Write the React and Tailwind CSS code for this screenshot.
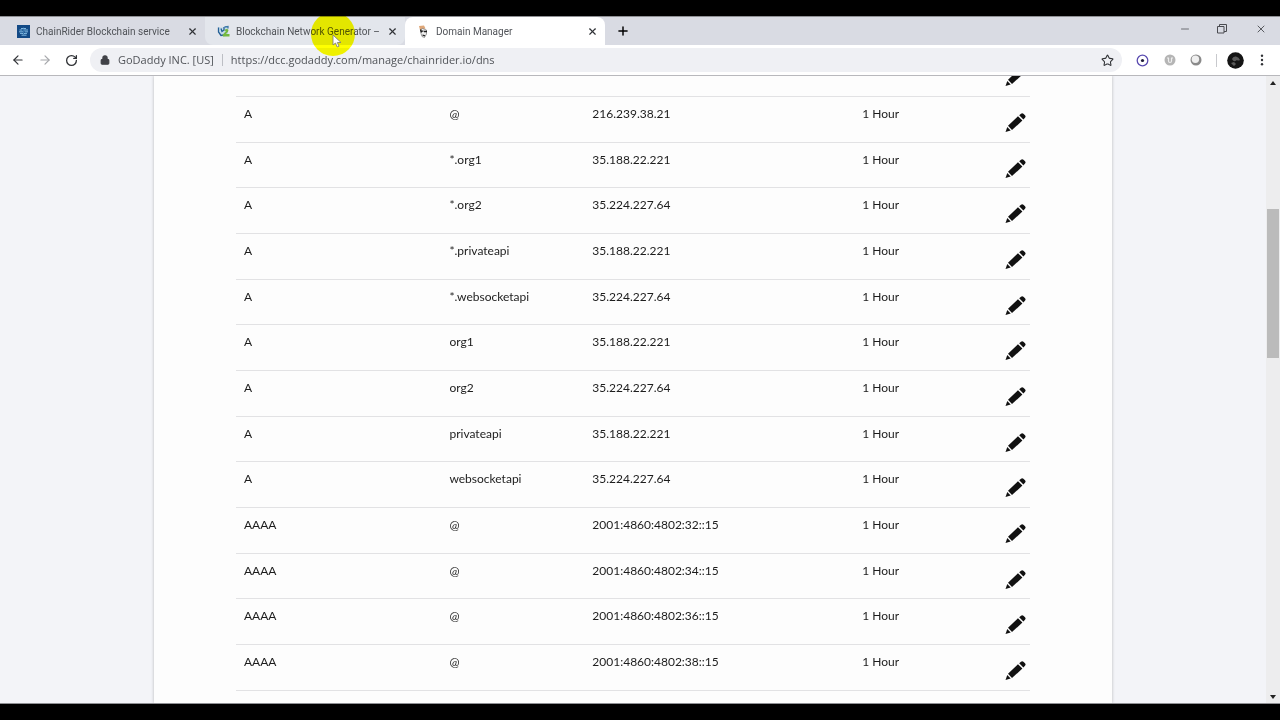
import { ArrowLeft, ArrowRight, Lock, Minus, Plus, RotateCw, Star, X } from 'lucide-react';

const tabs = [
  { title: 'ChainRider Blockchain service', icon: <ChainIcon />, shape: 'rounded-br-lg bg-[#d9dbe3]' },
  { title: 'Blockchain Network Generator –', icon: <GeneratorIcon />, shape: 'rounded-b-lg bg-[#e3e6ec]' },
  { title: 'Domain Manager', icon: <DaddyIcon />, shape: 'rounded-t-lg bg-white' },
];

const records = [
  { type: 'A', name: '@', value: '216.239.38.21' },
  { type: 'A', name: '*.org1', value: '35.188.22.221' },
  { type: 'A', name: '*.org2', value: '35.224.227.64' },
  { type: 'A', name: '*.privateapi', value: '35.188.22.221' },
  { type: 'A', name: '*.websocketapi', value: '35.224.227.64' },
  { type: 'A', name: 'org1', value: '35.188.22.221' },
  { type: 'A', name: 'org2', value: '35.224.227.64' },
  { type: 'A', name: 'privateapi', value: '35.188.22.221' },
  { type: 'A', name: 'websocketapi', value: '35.224.227.64' },
  { type: 'AAAA', name: '@', value: '2001:4860:4802:32::15' },
  { type: 'AAAA', name: '@', value: '2001:4860:4802:34::15' },
  { type: 'AAAA', name: '@', value: '2001:4860:4802:36::15' },
  { type: 'AAAA', name: '@', value: '2001:4860:4802:38::15' },
];

function ChainIcon() {
  return (
    <svg className="size-[13px] shrink-0" viewBox="0 0 13 13">
      <rect width="13" height="13" fill="#134a86" />
      <path d="M4 3.5h5M2.5 5h3M7 5h4M2 6.8h4M7.5 6.8h3.5M3 8.5h3M7 8.5h3M4.5 10.2h5" stroke="#8fc4e8" strokeWidth="0.9" />
      <path d="M6.5 2.5v8M4 4.5v4.5M9 4.5v4.5" stroke="#4f93c9" strokeWidth="0.6" />
    </svg>
  );
}

function GeneratorIcon() {
  return (
    <svg className="size-[13px] shrink-0" viewBox="0 0 13 13">
      <path d="M1 2l4 .5 5-1 1 2v6l-4 2.500-4-1.500z" fill="#c5dbe8" />
      <path d="M1.500 2.500v4.500l2.500 3.500 2.500-.5M4 3.500l1 3 2-1.500V2" fill="none" stroke="#235f96" strokeWidth="1.300" />
      <path d="M7.500 2l3.500-.5v2" fill="none" stroke="#3a78a8" strokeWidth="1.300" />
      <path d="M7 5.500q3-2.500 4.500-.5 0 2-2.500 4h3.500v2.500H6l-.5-1.500 3.500-4z" fill="#74b83f" />
    </svg>
  );
}

function DaddyIcon() {
  return (
    <svg className="size-[13px] shrink-0" viewBox="0 0 13 13">
      <path d="M2 1l5-.5 1.5 3L3 5z" fill="#dfa778" />
      <path d="M3.5 5l2-1.5 4 1.5v4l-2 3.5-2.5-1-1-3z" fill="#eee" stroke="#777" strokeWidth="0.7" />
      <path d="M4 6.2h2.5M7 6.5h3M5.5 10l2.5.8M3.5 4.5l1 3" stroke="#1c1c1c" strokeWidth="1.3" />
    </svg>
  );
}

function PencilIcon() {
  return (
    <svg className="h-5 w-[21px]" viewBox="0 0 21 20" fill="#111">
      <path d="M0.5 19l1.8-5 3.4 3.4z" />
      <path d="M3 12.8L13 3.2l4.400 4.400L7 17z" />
      <path d="M14.2 2.300l1.800-1.600q1.200-1 2.400 0l1.600 1.600q1.200 1.300 0 2.500L18.400 6.500z" />
    </svg>
  );
}

function Tab({ tab }) {
  return (
    <div className={`flex w-[200px] items-center pr-[7px] pl-3 ${tab.shape}`}>
      {tab.icon}
      <button className="ml-[6px] flex-1 text-left font-[Roboto,sans-serif] text-[10px] whitespace-nowrap text-[#505358]">
        {tab.title}
      </button>
      <button aria-label={`Close ${tab.title}`} className="flex size-3 items-center justify-center text-[#303236]">
        <X className="size-[11px]" strokeWidth={2.5} />
      </button>
    </div>
  );
}

function TabStrip() {
  return (
    <div className="flex h-7 bg-[#d9dbe3]">
      <div className="flex pl-[5px]">
        {tabs.map((tab) => (
          <Tab key={tab.title} tab={tab} />
        ))}
      </div>
      <button aria-label="New tab" className="ml-[11px] flex items-center text-black">
        <Plus className="size-[14px]" strokeWidth={2.5} />
      </button>
      <div className="ml-auto flex items-start gap-[26px] pt-[6px] pr-[13px] text-[#4a4b50]">
        <button aria-label="Minimize" className="flex size-3 items-center"><Minus className="size-3" strokeWidth={1.5} /></button>
        <button aria-label="Restore" className="flex size-3 items-center">
          <svg className="size-[10px]" viewBox="0 0 10 10" fill="none" stroke="currentColor">
            <path d="M0.5 2.5h6.5v6.5H0.5zM2.5 2.5v-2h7v7H7" />
          </svg>
        </button>
        <button aria-label="Close" className="flex size-3 items-center"><X className="size-3" strokeWidth={1.8} /></button>
      </div>
    </div>
  );
}

function Toolbar() {
  return (
    <div className="flex h-[31px] items-center border-b border-[#b8b8bc] bg-white">
      <div className="flex items-center gap-[13px] pl-[11px] text-[#303236]">
        <button aria-label="Back"><ArrowLeft className="size-[14px]" /></button>
        <button aria-label="Forward" className="text-[#a6a7ab]"><ArrowRight className="size-[14px]" /></button>
        <button aria-label="Reload"><RotateCw className="size-[13px]" strokeWidth={2.4} /></button>
      </div>
      <div className="ml-3 flex h-6 flex-1 items-center rounded-full bg-[#eff0f4] pr-2 pl-[10px] text-[11px] text-[#505358]">
        <Lock className="size-[10px] text-[#404247]" strokeWidth={3} fill="currentColor" />
        <span className="ml-2">GoDaddy INC. [US]</span>
        <span className="ml-2 h-3 w-px bg-[#bcbec4]" />
        <input
          aria-label="Address"
          className="ml-2 flex-1 bg-transparent outline-none"
          defaultValue="https://dcc.godaddy.com/manage/chainrider.io/dns"
        />
        <button aria-label="Bookmark this page" className="text-[#303236]"><Star className="size-[13px]" /></button>
      </div>
      <div className="flex items-center pr-4 pl-[14px]">
        <button aria-label="Circle extension">
          <svg className="size-[13px]" viewBox="0 0 13 13">
            <circle cx="6.5" cy="6.5" r="5.3" fill="#fff" stroke="#5a4bb0" strokeWidth="1.3" />
            <circle cx="6.5" cy="6.5" r="1.6" fill="#1d1b3a" />
          </svg>
        </button>
        <button aria-label="Shield extension" className="ml-[15px]">
          <svg className="size-3" viewBox="0 0 12 12">
            <circle cx="6" cy="6" r="5.5" fill="#b5b5b5" />
            <path d="M3 4h2M7 4h2M4.5 4v3q0 1.5 1.5 1.5T7.5 7V4" fill="none" stroke="#eee" strokeWidth="1.2" />
          </svg>
        </button>
        <button aria-label="Sphere extension" className="ml-[14px]">
          <svg className="size-3" viewBox="0 0 12 12">
            <circle cx="6" cy="6" r="5.5" fill="#8a8a8a" />
            <circle cx="5.4" cy="5.2" r="3.7" fill="#efefef" />
          </svg>
        </button>
        <span className="ml-[14px] h-[13px] w-px bg-[#c8c9cd]" />
        <button aria-label="Profile" className="ml-[10px]">
          <svg className="size-[17px]" viewBox="0 0 17 17">
            <circle cx="8.5" cy="8.5" r="8.3" fill="#141414" />
            <path d="M5 7q1-3 4-2.5T13 8q-2 1-3 0-2 2-4 .5zM4 11l3-1 2 2-2 2z" fill="#5a5a5a" />
          </svg>
        </button>
        <button aria-label="Menu" className="ml-4">
          <svg className="h-3 w-1" viewBox="0 0 4 12" fill="#303236">
            <circle cx="2" cy="1.8" r="1.2" />
            <circle cx="2" cy="6" r="1.2" />
            <circle cx="2" cy="10.2" r="1.2" />
          </svg>
        </button>
      </div>
    </div>
  );
}

function EditCell() {
  return (
    <td className="pt-4 pr-1 text-right align-top">
      <button aria-label="Edit record" className="inline-block align-top"><PencilIcon /></button>
    </td>
  );
}

function RecordsTable() {
  return (
    <table className="-mt-[25px] w-full table-fixed border-separate border-spacing-0 font-[Lato,sans-serif] text-xs text-[#1c1c1c] [&_td]:border-b [&_td]:border-[#e2e2e4]">
      <colgroup>
        <col className="w-[26%]" />
        <col className="w-[18%]" />
        <col className="w-[34%]" />
        <col className="w-[16%]" />
        <col className="w-[6%]" />
      </colgroup>
      <tbody>
        {/* scrolled halfway out, only its pencil is still visible */}
        <tr className="h-[46px]">
          <td colSpan={4} />
          <EditCell />
        </tr>
        {records.map((record, i) => (
          <tr key={i} className={i % 3 === 1 ? 'h-[45px]' : 'h-[46px]'}>
            <td className="pt-[9px] pl-2 align-top">{record.type}</td>
            <td className="pt-[9px] pl-[7px] align-top">{record.name}</td>
            <td className="pt-[9px] pl-[7px] align-top">{record.value}</td>
            <td className="pt-[9px] pl-[7px] align-top">1 Hour</td>
            <EditCell />
          </tr>
        ))}
      </tbody>
    </table>
  );
}

function Scrollbar() {
  return (
    <div className="flex w-[14px] flex-col items-center justify-between bg-[#ededee] pt-[5px] pb-1">
      <svg className="h-1 w-[6px]" viewBox="0 0 6 4"><path d="M0 4l3-4 3 4z" fill="#222" /></svg>
      <div className="mb-[214px] h-[149px] w-3 bg-[#bbb]" />
      <svg className="h-1 w-[6px]" viewBox="0 0 6 4"><path d="M0 0l3 4 3-4z" fill="#222" /></svg>
    </div>
  );
}

export default function App() {
  return (
    <div className="relative flex h-screen flex-col bg-black pt-4 pb-4 font-['Open_Sans',sans-serif]">
      <div className="h-px bg-[#8f9094]" />
      <TabStrip />
      <Toolbar />
      <div className="flex min-h-0 flex-1 border-b border-[#8f9094]">
        <main className="flex flex-1 justify-center overflow-hidden bg-[#f3f4f8]">
          <div className="w-full max-w-[958px] bg-[#fdfdfd] px-[82px] shadow-[0_0_3px_rgba(0,0,0,0.25)]">
            <RecordsTable />
          </div>
        </main>
        <Scrollbar />
      </div>
      {/* highlighted mouse pointer */}
      <div className="absolute top-4 left-[311px] h-10 w-11 overflow-hidden mix-blend-multiply">
        <div className="-mt-1 size-11 rounded-full bg-[#ffff00]" />
      </div>
      <svg className="absolute top-[34px] left-[332px] h-[14px] w-[10px]" viewBox="0 0 10 14">
        <path d="M1 1v10l2.5-2 1.7 4 1.8-.8-1.7-3.7H9z" fill="#fff" stroke="#777" strokeWidth="0.8" />
      </svg>
    </div>
  );
}
